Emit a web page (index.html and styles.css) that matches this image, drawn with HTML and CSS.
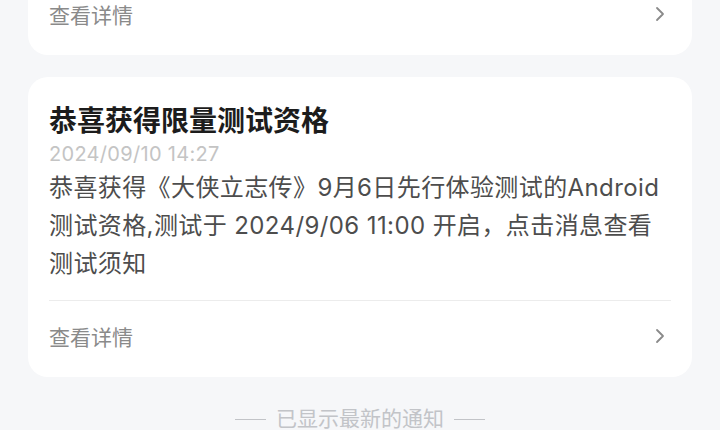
FILE: index.html
```
<!DOCTYPE html>
<html lang="zh-CN">
<head>
<meta charset="utf-8">
<title>通知</title>
<link rel="stylesheet" href="styles.css">
</head>
<body>
<main class="list">
  <section class="card card-cut">
    <a class="detail" href="#">
      <span>查看详情</span>
      <svg class="chev" width="10" height="16" viewBox="0 0 10 16"><polyline points="2,2 8,8 2,14" fill="none" stroke="#8a8a8a" stroke-width="1.8" stroke-linecap="round" stroke-linejoin="round"/></svg>
    </a>
  </section>
  <section class="card">
    <div class="content">
      <h2 class="title">恭喜获得限量测试资格</h2>
      <div class="date">2024/09/10 14:27</div>
      <p class="body">恭喜获得《大侠立志传》9月6日先行体验测试的Android<br>测试资格,测试于 2024/9/06 11:00 开启，点击消息查看<br>测试须知</p>
    </div>
    <a class="detail" href="#">
      <span>查看详情</span>
      <svg class="chev" width="10" height="16" viewBox="0 0 10 16"><polyline points="2,2 8,8 2,14" fill="none" stroke="#8a8a8a" stroke-width="1.8" stroke-linecap="round" stroke-linejoin="round"/></svg>
    </a>
  </section>
  <div class="end"><span class="dash"></span>已显示最新的通知<span class="dash"></span></div>
</main>
</body>
</html>
```
FILE: styles.css
```
html, body {
  margin: 0;
  padding: 0;
  background: #f6f7f9;
  font-family: "Inter", "Noto Sans CJK SC", sans-serif;
  overflow: hidden;
}
.list {
  display: flex;
  flex-direction: column;
  gap: 22px;
  padding: 0 28px;
}
.card {
  background: #ffffff;
  border-radius: 20px;
  padding: 0 21px 6px;
}
.card-cut {
  margin-top: -21px;
  border-top-left-radius: 0;
  border-top-right-radius: 0;
}
.content {
  padding: 26px 0 17px;
  border-bottom: 1px solid #ececec;
}
.title {
  margin: 0;
  font-size: 28px;
  line-height: 36px;
  font-weight: 700;
  color: #1c1c1c;
}
.date {
  font-size: 20px;
  line-height: 30px;
  letter-spacing: 0.3px;
  color: #c4c4c4;
}
.body {
  margin: 0;
  font-size: 24px;
  line-height: 38px;
  letter-spacing: 0.4px;
  color: #4d4d4d;
  white-space: nowrap;
}
.detail {
  display: flex;
  align-items: center;
  justify-content: space-between;
  height: 70px;
  text-decoration: none;
  font-size: 21px;
  color: #8a8a8a;
}
.chev {
  margin-right: 6px;
}
.end {
  display: flex;
  align-items: center;
  justify-content: center;
  gap: 10px;
  font-size: 21px;
  line-height: 26px;
  color: #c2c4c8;
  margin-top: 7px;
}
.dash {
  width: 31px;
  height: 1px;
  background: #c2c4c8;
}
```
